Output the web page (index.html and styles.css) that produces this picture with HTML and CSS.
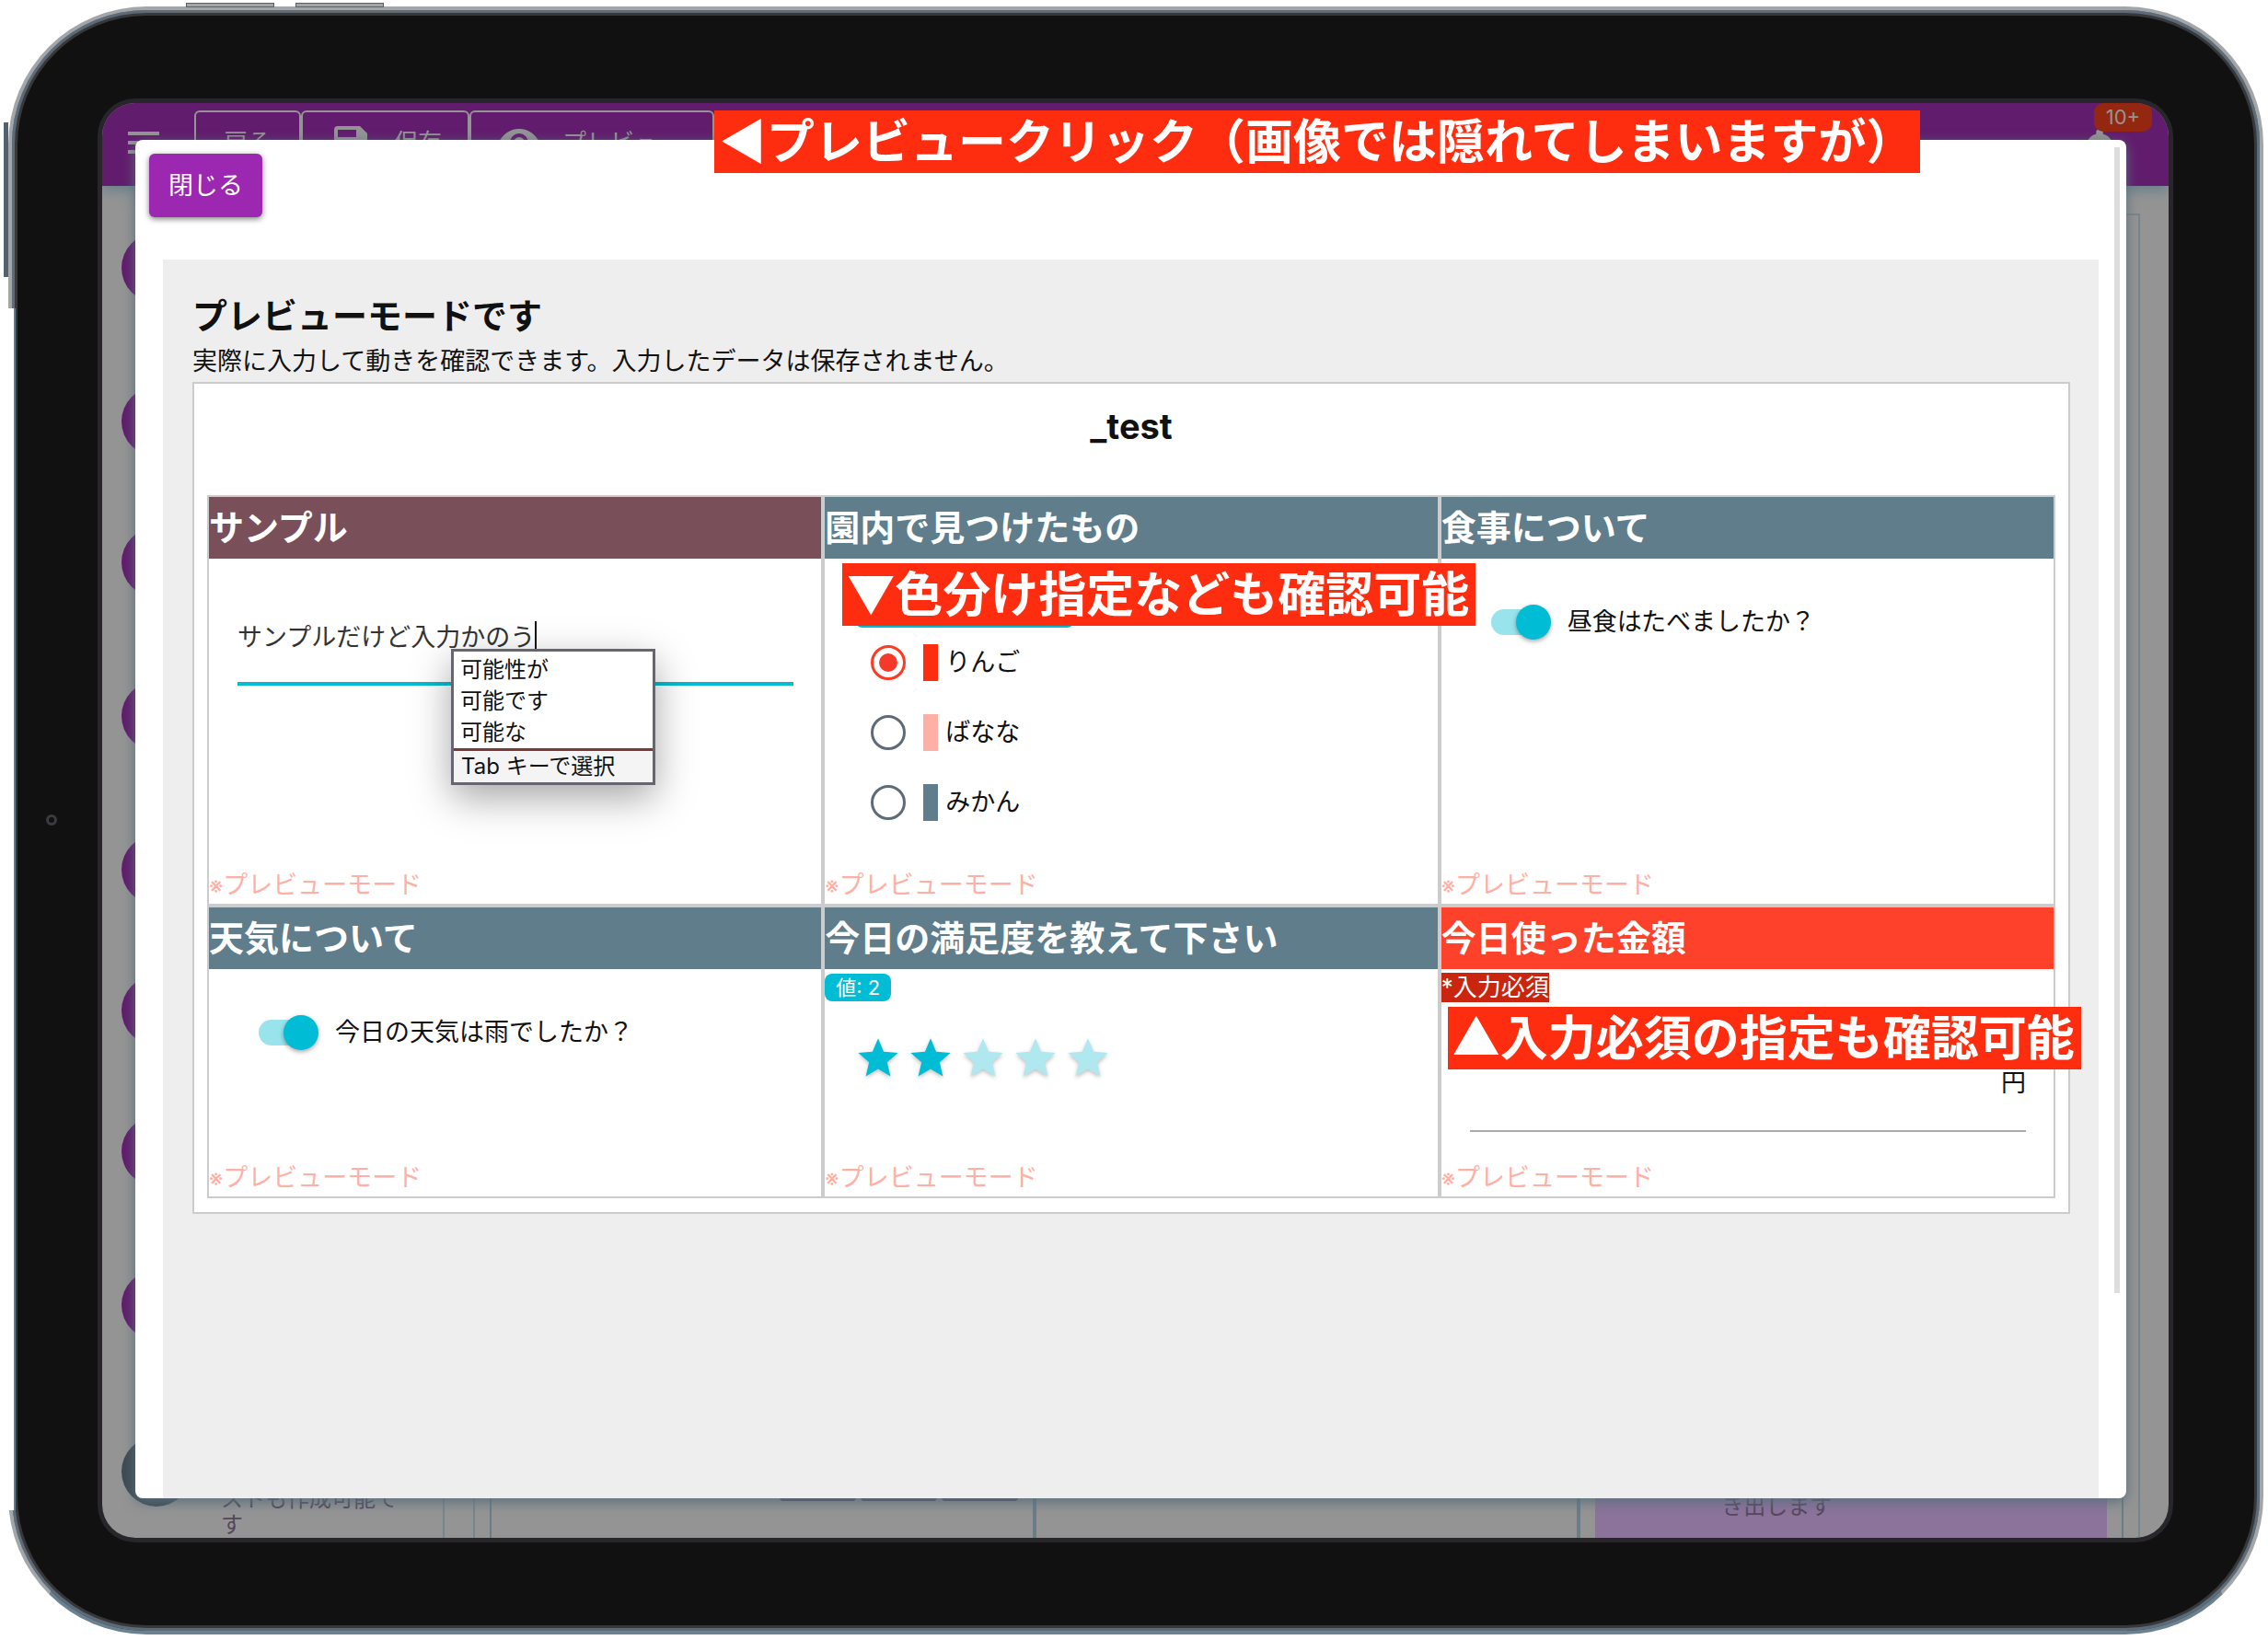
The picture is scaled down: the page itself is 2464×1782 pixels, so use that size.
FILE: index.html
```
<!DOCTYPE html>
<html lang="ja">
<head>
<meta charset="utf-8">
<title>プレビューモード</title>
<link rel="stylesheet" href="styles.css">
</head>
<body>
<div class="device">
  <span class="key key-top"></span>
  <span class="key key-top key-top-second"></span>
  <span class="key key-side"></span>
  <span class="edge"></span>
  <span class="camera"></span>

  <div class="screen">
    <div class="app">
      <header class="app-bar">
        <button class="menu" aria-label="メニュー"><span></span><span></span><span></span></button>
        <div class="app-actions">
          <button class="action">戻る</button>
          <button class="action action-icon">
            <svg class="icon" viewBox="0 0 24 24" aria-hidden="true"><path fill-rule="evenodd" d="M17 3H5a2 2 0 0 0-2 2v14a2 2 0 0 0 2 2h14a2 2 0 0 0 2-2V7zm-5 16a3 3 0 1 1 0-6 3 3 0 0 1 0 6zm3-10H5V5h10z"/></svg>
            保存
          </button>
          <button class="action action-icon action-preview">
            <svg class="icon" viewBox="0 0 24 24" aria-hidden="true"><path fill-rule="evenodd" d="M12 4.500C7 4.500 2.730 7.610 1 12c1.730 4.390 6 7.500 11 7.500s9.270-3.110 11-7.500c-1.730-4.390-6-7.500-11-7.500zM12 17a5 5 0 1 1 0-10 5 5 0 0 1 0 10zm0-8a3 3 0 1 0 0 6 3 3 0 0 0 0-6z"/></svg>
            プレビュー
          </button>
        </div>
        <button class="bell" aria-label="通知">
          <svg class="bell-icon" viewBox="0 0 24 24" aria-hidden="true"><path d="M12 22a2 2 0 0 0 2-2h-4a2 2 0 0 0 2 2zm6-6v-5c0-3.070-1.640-5.640-4.500-6.320V4a1.500 1.500 0 0 0-3 0v.68C7.630 5.360 6 7.920 6 11v5l-2 2v1h16v-1z"/></svg>
          <span class="bell-count">10+</span>
        </button>
      </header>
      <div class="app-main">
        <ul class="parts">
          <li class="part part-tall"><i></i></li>
          <li class="part"><i></i></li>
          <li class="part part-tall"><i></i></li>
          <li class="part part-tall"><i></i></li>
          <li class="part"><i></i></li>
          <li class="part"><i></i></li>
          <li class="part part-tall"><i></i></li>
          <li class="part part-tallest"><i></i></li>
          <li class="part part-last"><i></i><p>ストも作成可能です</p></li>
        </ul>
        <div class="board">
          <div class="board-col"><div class="chips"><span></span><span></span><span></span></div></div>
          <div class="board-col"></div>
          <div class="board-col"><div class="block">き出します</div></div>
        </div>
      </div>
    </div>

    <div class="dialog" role="dialog" aria-label="プレビュー">
      <div class="dialog-bar"><button class="close">閉じる</button></div>
      <span class="scroll-thumb"></span>
      <main class="panel">
        <h1 class="panel-title">プレビューモードです</h1>
        <p class="panel-text">実際に入力して動きを確認できます。入力したデータは保存されません。</p>
        <form class="card">
          <h2 class="card-title">_test</h2>
          <div class="cells">

            <section class="cell">
              <h3 class="cell-head head-plum">サンプル</h3>
              <div class="field field-text">
                <input class="line-input" type="text" value="サンプルだけど入力かのう" aria-label="サンプル">
                <span class="caret"></span>
                <span class="composing"></span>
                <div class="ime">
                  <ul>
                    <li>可能性が</li>
                    <li>可能です</li>
                    <li>可能な</li>
                  </ul>
                  <p>Tab キーで選択</p>
                </div>
              </div>
              <p class="note"><small>※</small>プレビューモード</p>
            </section>

            <section class="cell">
              <h3 class="cell-head">園内で見つけたもの</h3>
              <div class="chosen"></div>
              <div class="options">
                <label class="option"><input class="radio" type="radio" name="found" checked><span class="swatch swatch-red"></span>りんご</label>
                <label class="option"><input class="radio" type="radio" name="found"><span class="swatch swatch-pink"></span>ばなな</label>
                <label class="option"><input class="radio" type="radio" name="found"><span class="swatch swatch-slate"></span>みかん</label>
              </div>
              <p class="note"><small>※</small>プレビューモード</p>
              <div class="callout callout-colors">▼色分け指定なども確認可能</div>
            </section>

            <section class="cell">
              <h3 class="cell-head">食事について</h3>
              <label class="toggle"><input class="switch" type="checkbox" checked>昼食はたべましたか？</label>
              <p class="note"><small>※</small>プレビューモード</p>
            </section>

            <section class="cell">
              <h3 class="cell-head">天気について</h3>
              <label class="toggle"><input class="switch" type="checkbox" checked>今日の天気は雨でしたか？</label>
              <p class="note"><small>※</small>プレビューモード</p>
            </section>

            <section class="cell">
              <h3 class="cell-head">今日の満足度を教えて下さい</h3>
              <span class="value">値: 2</span>
              <div class="stars">
                <button type="button" class="star star-on" aria-label="1"><svg viewBox="0 0 24 24"><path d="M12 17.270 18.180 21l-1.640-7.030L22 9.240l-7.190-.61L12 2 9.190 8.630 2 9.240l5.460 4.730L5.820 21z"/></svg></button>
                <button type="button" class="star star-on" aria-label="2"><svg viewBox="0 0 24 24"><path d="M12 17.270 18.180 21l-1.640-7.030L22 9.240l-7.190-.61L12 2 9.190 8.630 2 9.240l5.460 4.730L5.820 21z"/></svg></button>
                <button type="button" class="star" aria-label="3"><svg viewBox="0 0 24 24"><path d="M12 17.270 18.180 21l-1.640-7.030L22 9.240l-7.190-.61L12 2 9.190 8.630 2 9.240l5.460 4.730L5.820 21z"/></svg></button>
                <button type="button" class="star" aria-label="4"><svg viewBox="0 0 24 24"><path d="M12 17.270 18.180 21l-1.640-7.030L22 9.240l-7.190-.61L12 2 9.190 8.630 2 9.240l5.460 4.730L5.820 21z"/></svg></button>
                <button type="button" class="star" aria-label="5"><svg viewBox="0 0 24 24"><path d="M12 17.270 18.180 21l-1.640-7.030L22 9.240l-7.190-.61L12 2 9.190 8.630 2 9.240l5.460 4.730L5.820 21z"/></svg></button>
              </div>
              <p class="note"><small>※</small>プレビューモード</p>
            </section>

            <section class="cell">
              <h3 class="cell-head head-red">今日使った金額</h3>
              <span class="required">*入力必須</span>
              <label class="field field-amount"><input class="amount" type="text" aria-label="今日使った金額">円</label>
              <p class="note"><small>※</small>プレビューモード</p>
              <div class="callout callout-required">▲入力必須の指定も確認可能</div>
            </section>

          </div>
        </form>
      </main>
    </div>

    <div class="callout callout-preview">◀プレビュークリック（画像では隠れてしまいますが）</div>
  </div>
</div>
</body>
</html>
```
FILE: styles.css
```
* { box-sizing: border-box; }

body {
  margin: 0;
  min-height: 100vh;
  display: flex;
  background: #fff;
  color: #111;
  font: 27px/40px "Inter", "Noto Sans CJK JP", sans-serif;
}

h1, h2, h3, p, ul { margin: 0; padding: 0; }
ul { list-style: none; }
button { font: inherit; margin: 0; border: 0; background: none; }
input { font: inherit; color: inherit; margin: 0; }

/* tablet */
.device {
  position: relative;
  flex: 1;
  display: flex;
  margin: 7px 5px 7px 9px;
  padding: 101px 99px 101px 98px;
  border: 4px solid #a3a6a8;
  border-bottom-color: #6b8190;
  border-radius: 150px;
  background: #111;
  box-shadow: inset 0 0 0 3px #5c6b79, inset 0 0 0 6px #38383a;
}
.key { position: absolute; background: #a3a6a8; }
.key-top { left: 189px; top: -8px; width: 96px; height: 5px; border: 1px solid #54606c; }
.key-top-second { left: 308px; }
.key-side { left: -9px; top: 122px; width: 5px; height: 168px; background: #54606c; }
.edge {
  position: absolute;
  left: -9px;
  top: 324px;
  bottom: 131px;
  width: 13px;
  background: #fff;
  border-right: 2px solid #607d8b;
}
.camera {
  position: absolute;
  left: 37px;
  top: 874px;
  width: 12px;
  height: 12px;
  border: 3px solid #3c3a42;
  border-radius: 50%;
}
.screen {
  position: relative;
  flex: 1;
  display: grid;
  border-radius: 36px;
  box-shadow: 0 0 0 5px #28262a;
}

/* dimmed editor behind the dialog */
.app {
  grid-area: 1 / 1;
  display: flex;
  flex-direction: column;
  overflow: hidden;
  border-radius: 36px;
  background: #949494;
}
.app-bar {
  display: flex;
  align-items: flex-start;
  height: 90px;
  padding: 8px 17px 0 28px;
  background: #611c6d;
  color: #949494;
  box-shadow: 0 4px 14px #607d8b;
}
.menu {
  display: flex;
  flex-direction: column;
  gap: 6px;
  width: 34px;
  margin-top: 23px;
  padding: 0;
}
.menu span { height: 4px; background: #949494; }
.app-actions { display: flex; margin-left: 38px; }
.action {
  display: flex;
  align-items: center;
  gap: 23px;
  height: 70px;
  padding: 0 30px;
  border: 2px solid #949494;
  border-radius: 6px;
  color: #949494;
  font-size: 26px;
}
.action-icon { padding: 0 28px; }
.icon { flex: none; width: 48px; height: 48px; fill: #949494; }
.action-preview { width: 266px; white-space: nowrap; overflow: hidden; }
.bell { position: relative; margin-left: auto; width: 64px; height: 60px; padding: 0; }
.bell-icon { position: absolute; left: -24px; top: 14px; width: 60px; height: 60px; fill: #949494; }
.bell-count {
  position: absolute;
  left: 0;
  top: -8px;
  width: 63px;
  height: 31px;
  border-radius: 10px;
  background: #94270f;
  color: #949494;
  font-size: 22px;
  line-height: 31px;
}
.app-main { flex: 1; display: flex; }
.parts { flex: none; width: 372px; padding: 51px 0 0 21px; border-right: 2px solid #76868e; }
.part { display: flex; gap: 32px; height: 153px; }
.part-tall { height: 167px; }
.part-tallest { height: 181px; }
.part i { flex: none; width: 76px; height: 76px; border-radius: 50%; background: #611c6d; }
.part-last { height: 110px; }
.part-last i { background: #3d4b53; }
.part p { width: 200px; align-self: flex-end; color: #54475a; font-size: 24px; line-height: 28px; }
.board {
  flex: 1;
  display: grid;
  grid-template-columns: repeat(3, 1fr);
  margin: 30px 31px 0 31px;
  padding: 16px 16px 0;
  border: 2px solid #76868e;
  border-bottom: 0;
}
.board-col {
  display: flex;
  flex-direction: column;
  justify-content: flex-end;
  border: 2px solid #6a7c86;
  border-bottom: 0;
}
.chips { display: flex; gap: 5px; margin: 0 0 40px 313px; }
.chips span { width: 83px; height: 40px; border-radius: 4px; background: #54475a; }
.block {
  height: 80px;
  margin: 0 16px;
  padding-left: 137px;
  background: #8c739c;
  color: #54475a;
  font-size: 24px;
  line-height: 28px;
  padding-top: 32px;
}

/* preview dialog */
.dialog {
  grid-area: 1 / 1;
  position: relative;
  display: flex;
  flex-direction: column;
  margin: 40px 46px 43px 36px;
  border-radius: 8px;
  background: #fff;
  box-shadow: 0 4px 14px #5a707c;
}
.dialog-bar { padding: 15px 15px 46px; }
.close {
  display: block;
  width: 123px;
  height: 69px;
  padding: 0;
  border-radius: 6px;
  background: #9c27b0;
  color: #fff;
  box-shadow: 0 2px 6px rgba(0, 0, 0, .5);
}
.scroll-thumb {
  position: absolute;
  right: 7px;
  top: 8px;
  bottom: 223px;
  width: 6px;
  background: #ddd;
}
.panel { flex: 1; margin: 0 30px; padding: 34px 31px 80px 32px; background: #eee; }
.panel-title { font-size: 38px; line-height: 54px; }
.panel-text { line-height: 45px; }

.card { padding: 0 14px 15px; border: 2px solid #ccc; background: #fff; }
.card-title { height: 121px; font-size: 38px; line-height: 92px; text-align: center; }
.cells { display: grid; grid-template-columns: repeat(3, 1fr); grid-template-rows: minmax(446px, auto) minmax(318px, auto); }
.cell {
  position: relative;
  display: flex;
  flex-direction: column;
  align-items: flex-start;
  border: 2px solid #ccc;
}
.cell-head {
  align-self: stretch;
  background: #607d8b;
  color: #fff;
  font-size: 38px;
  line-height: 67px;
}
.head-plum { background: #79505a; }
.head-red { background: #fe412a; }
.note { margin-top: auto; color: #ffb0a4; line-height: 38px; }
.note small { font-size: 24px; }

.field { align-self: stretch; margin: 53px 30px 0 31px; }
.field-text { position: relative; }
.line-input {
  display: block;
  width: 100%;
  height: 85px;
  padding: 0 0 21px;
  border: 0;
  border-bottom: 4px solid #00bcd4;
  outline: 0;
  background: none;
  color: #333;
}
.caret { position: absolute; left: 323px; top: 15px; width: 2px; height: 32px; background: #111; }
.composing { position: absolute; left: 243px; top: 45px; width: 80px; height: 2px; background: #111; }
.ime {
  position: absolute;
  left: 232px;
  top: 45px;
  z-index: 1;
  width: 222px;
  border: 3px solid #666672;
  background: #fff;
  box-shadow: 0 14px 40px rgba(0, 0, 0, .35);
  font-size: 24px;
  line-height: 34px;
}
.ime ul { padding: 3px 7px 0; }
.ime p {
  padding: 0 8px;
  border-top: 3px solid #7a3a36;
  background: #f4f4f4;
}

.chosen { width: 238px; height: 46px; margin: 29px 0 0 33px; border-radius: 8px; background: #00bcd4; }
.options { padding-left: 50px; }
.option { display: flex; align-items: center; height: 76px; }
.radio {
  appearance: none;
  display: grid;
  place-items: center;
  width: 38px;
  height: 38px;
  border: 3px solid #5f6c78;
  border-radius: 50%;
}
.radio:checked { border-color: #ff3a22; }
.radio:checked::before { content: ""; width: 20px; height: 20px; border-radius: 50%; background: #f63a2a; }
.swatch { width: 16px; height: 40px; margin: 0 8px 0 19px; }
.swatch-red { background: #ff2d10; }
.swatch-pink { background: #ffb0a4; }
.swatch-slate { background: #607d8b; }

.toggle { display: flex; align-items: center; gap: 18px; height: 137px; padding-left: 54px; }
.switch { appearance: none; position: relative; width: 65px; height: 38px; }
.switch::before {
  content: "";
  position: absolute;
  left: 0;
  top: 5px;
  width: 58px;
  height: 28px;
  border-radius: 14px;
  background: #99e3ed;
}
.switch::after {
  content: "";
  position: absolute;
  right: 0;
  top: 0;
  width: 38px;
  height: 38px;
  border-radius: 50%;
  background: #00bcd4;
  box-shadow: 0 2px 5px rgba(0, 0, 0, .35);
}

.value {
  height: 30px;
  margin-top: 5px;
  padding: 0 12px;
  border-radius: 8px;
  background: #00bcd4;
  color: #fff;
  font-size: 22px;
  line-height: 30px;
}
.stars { display: flex; gap: 5px; margin: 36px 0 0 32px; }
.star { width: 52px; height: 52px; padding: 0; }
.star svg { display: block; fill: #b0e8f0; filter: drop-shadow(0 2px 2px rgba(0, 0, 0, .25)); }
.star-on svg { fill: #00bcd4; }

.required {
  height: 32px;
  margin-top: 4px;
  background: #c9250f;
  color: #fff;
  font-size: 26px;
  line-height: 32px;
}
.field-amount {
  display: flex;
  height: 67px;
  margin-top: 74px;
  border-bottom: 2px solid #aaa;
  line-height: 28px;
}
.amount { flex: 1; height: 60px; padding: 0; border: 0; outline: 0; background: none; }

/* explanatory labels laid over the screen */
.callout {
  position: absolute;
  z-index: 2;
  height: 68px;
  padding: 0 7px 0 5px;
  background: #ff2d10;
  color: #fff;
  font: bold 52px/62px "Noto Sans CJK JP", sans-serif;
  white-space: nowrap;
}
.callout-colors { left: 19px; top: 72px; }
.callout-required { left: 7px; top: 108px; }
.callout-preview { left: 665px; top: 8px; }
```
